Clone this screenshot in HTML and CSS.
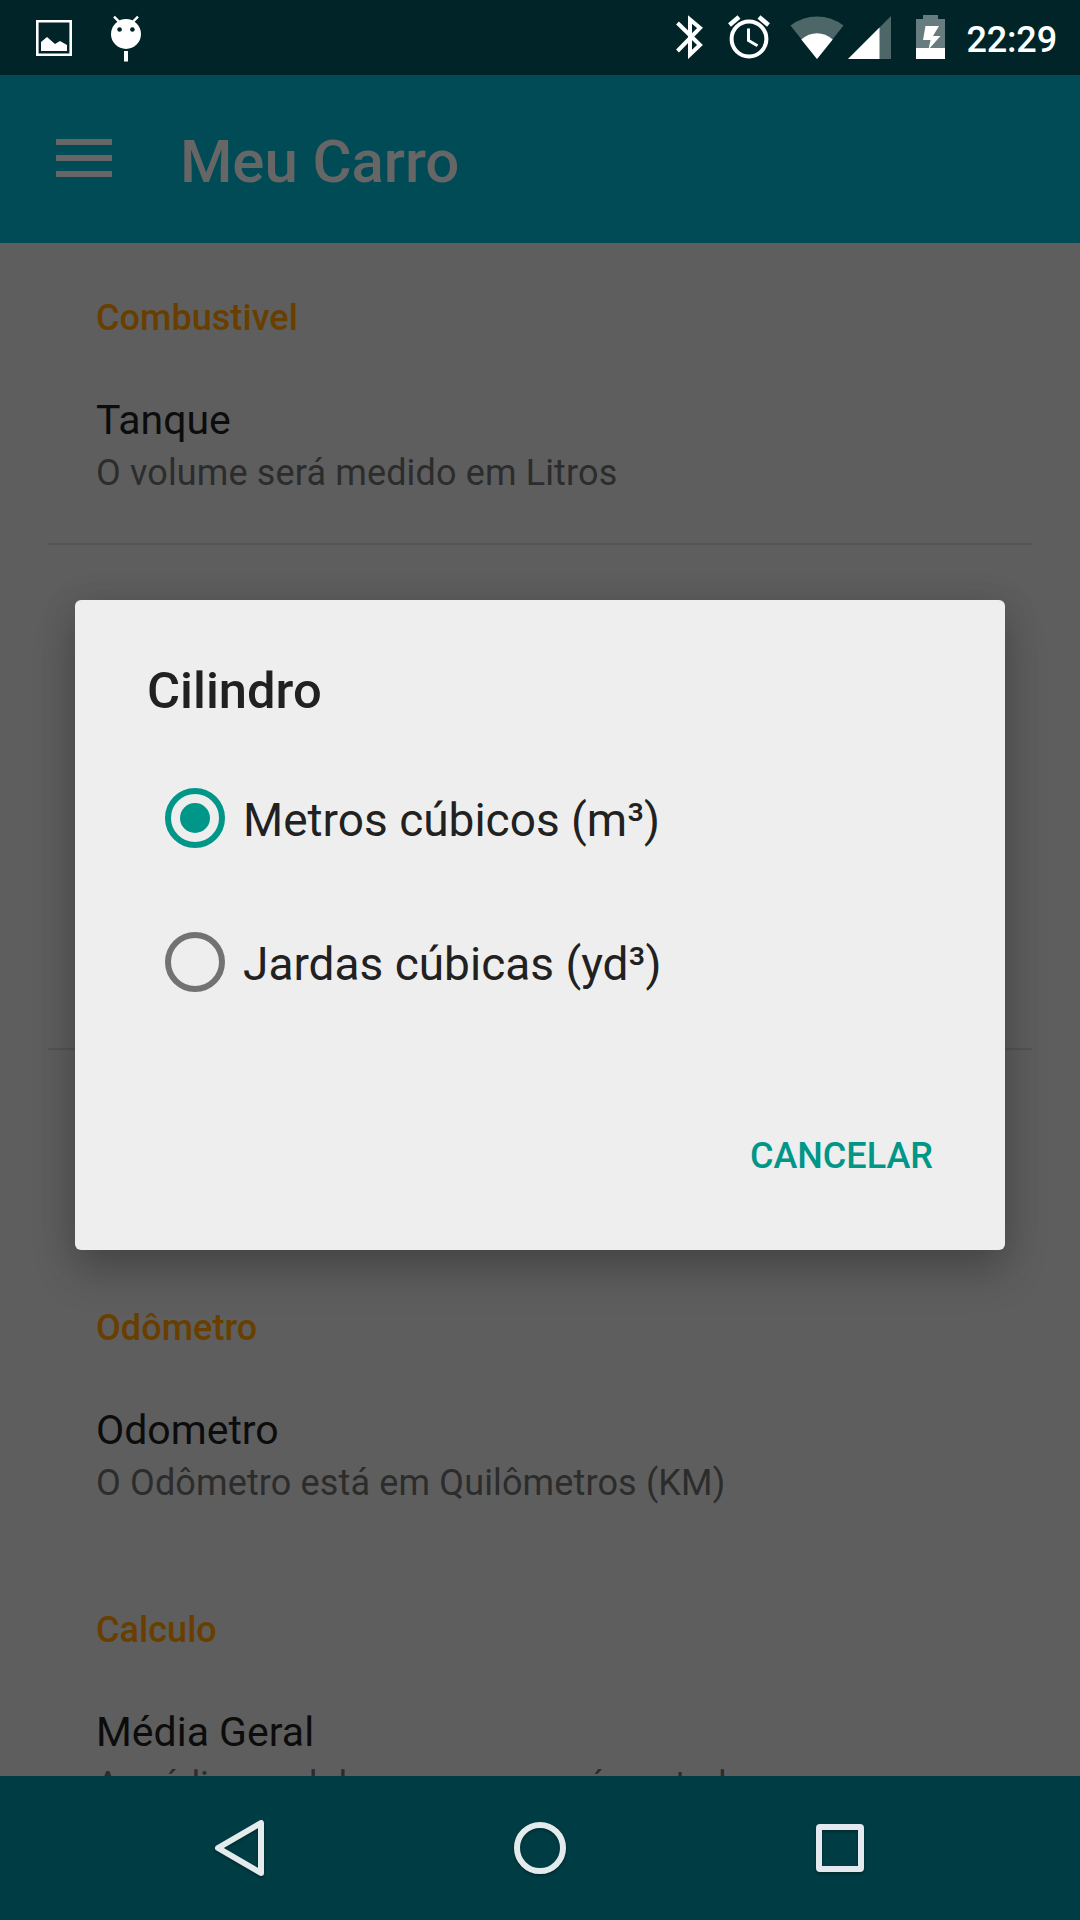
FILE: index.html
```html
<!DOCTYPE html>
<html lang="pt-BR">
<head>
<meta charset="utf-8">
<title>Meu Carro</title>
<link rel="stylesheet" href="styles.css">
</head>
<body>
<div class="screen">
  <header class="status-bar">
    <div class="notifications">
      <svg class="icon-picture" width="36" height="36" viewBox="0 0 36 36"><path d="M0 0H36V36H0ZM2.600 2.600V33.400H33.400V2.600Z" fill="#fff" fill-rule="evenodd"/><path d="M5 31V22L11 17L19 24L24 21L31 25V31Z" fill="#fff"/></svg>
      <svg class="icon-droid" width="30" height="48" viewBox="0 0 30 48"><path d="M3 1.600L8 6.600M27 1.600L22 6.600" stroke="#fff" stroke-width="2.400"/><circle cx="15" cy="19" r="15" fill="#fff"/><circle cx="8.600" cy="14.500" r="2.300" fill="#002427"/><circle cx="21.400" cy="14.500" r="2.300" fill="#002427"/><path d="M13 36H17V46.500H13Z" fill="#fff"/></svg>
    </div>
    <div class="indicators">
      <svg class="icon-bluetooth" width="27" height="44" viewBox="0 0 27 44"><path d="M1.500 8L24 30L14 39.500V4.500L24 13L1.500 36" fill="none" stroke="#fff" stroke-width="4"/></svg>
      <svg class="icon-alarm" width="42" height="44" viewBox="0 0 42 44"><circle cx="21" cy="24" r="17.400" fill="none" stroke="#fff" stroke-width="4"/><path d="M1.500 10L11 2M40.500 10L31 2" stroke="#fff" stroke-width="4.500"/><path d="M20.500 13.500V25.500L29.500 30.700" fill="none" stroke="#fff" stroke-width="3"/></svg>
      <svg class="icon-wifi" width="54" height="44" viewBox="0 0 54 44"><path d="M27 43L0.500 9.500Q12.500 0.500 27 0.500T53.500 9.500Z" fill="#4d6668"/><path d="M27 43L11.300 23.400Q18.500 17.300 27 17.300T42.700 23.400Z" fill="#fff"/></svg>
      <svg class="icon-signal" width="43" height="43" viewBox="0 0 43 43"><path d="M43 0V43H0Z" fill="#4d6668"/><path d="M31.500 11.500V43H0Z" fill="#fff"/></svg>
      <svg class="icon-battery" width="29" height="44" viewBox="0 0 29 44"><path d="M7 0H22V4H29V44H0V4H7Z" fill="#677c7e"/><path d="M0 33H29V44H0Z" fill="#fff"/><path d="M9.500 11H23L17 21H24.500L12.500 34.500L14.500 25H7Z" fill="#fff"/></svg>
      <span class="clock">22:29</span>
    </div>
  </header>

  <div class="app-bar">
    <svg class="icon-menu" width="56" height="38" viewBox="0 0 56 38"><path d="M0 0H56V6H0ZM0 16H56V22H0ZM0 32H56V38H0Z" fill="#666"/></svg>
    <h1 class="app-title">Meu Carro</h1>
  </div>

  <main class="settings">
    <section class="group group-fuel">
      <h2 class="group-title">Combustivel</h2>
      <div class="item">
        <div class="item-title">Tanque</div>
        <div class="item-summary">O volume será medido em Litros</div>
      </div>
    </section>
    <section class="group group-cylinder"></section>
    <section class="group group-odometer">
      <h2 class="group-title">Odômetro</h2>
      <div class="item">
        <div class="item-title">Odometro</div>
        <div class="item-summary">O Odômetro está em Quilômetros (KM)</div>
      </div>
    </section>
    <section class="group group-math">
      <h2 class="group-title">Calculo</h2>
      <div class="item">
        <div class="item-title">Média Geral</div>
        <div class="item-summary">A média geral do seu carro será contada</div>
      </div>
    </section>
  </main>

  <nav class="nav-bar">
    <svg class="nav-icon" width="60" height="60" viewBox="0 0 60 60"><path d="M8 30L51 5V55Z" fill="none" stroke="#e4ebed" stroke-width="6" stroke-linejoin="round"/></svg>
    <svg class="nav-icon" width="60" height="60" viewBox="0 0 60 60"><circle cx="30" cy="30" r="23" fill="none" stroke="#e4ebed" stroke-width="6"/></svg>
    <svg class="nav-icon" width="60" height="60" viewBox="0 0 60 60"><rect x="9" y="9" width="42" height="42" rx="1" fill="none" stroke="#e4e9ef" stroke-width="6"/></svg>
  </nav>

  <div class="dialog">
    <h2 class="dialog-title">Cilindro</h2>
    <div class="option">
      <span class="radio radio-on"></span>
      <span class="option-label">Metros cúbicos (m³)</span>
    </div>
    <div class="option">
      <span class="radio"></span>
      <span class="option-label">Jardas cúbicas (yd³)</span>
    </div>
    <div class="dialog-actions"><span class="action">CANCELAR</span></div>
  </div>
</div>
</body>
</html>
```
FILE: styles.css
```css
* { box-sizing: border-box; margin: 0; padding: 0; }
body { font-family: Roboto, sans-serif; background: #5e5e5e; }
svg { display: block; flex: none; }

.screen {
  position: relative;
  width: 1080px;
  height: 1920px;
  overflow: hidden;
  display: flex;
  flex-direction: column;
}

.status-bar {
  flex: none;
  height: 75px;
  background: #002427;
  display: flex;
  justify-content: space-between;
  padding: 0 23px 0 36px;
}
.notifications, .indicators { display: flex; align-items: flex-start; }
.icon-picture { margin-top: 20px; }
.icon-droid { margin: 15px 0 0 39px; }
.icon-bluetooth { margin: 15px 25px 0 0; }
.icon-alarm { margin: 15px 20px 0 0; }
.icon-wifi { margin: 16px 4.500px 0 0; }
.icon-signal { margin: 16px 25px 0 0; }
.icon-battery { margin: 15px 21px 0 0; }
.clock { font-size: 36px; font-weight: 500; line-height: 42px; color: #fff; margin-top: 19px; letter-spacing: -.15px; }

.app-bar {
  flex: none;
  height: 168px;
  background: #004b56;
  display: flex;
  align-items: center;
  padding-left: 56px;
}
.icon-menu { margin-bottom: 2px; }
.app-title { margin-left: 68px; padding-top: 5px; font-size: 60px; line-height: 70px; font-weight: 500; letter-spacing: -.1px; color: #666; }

.settings { flex: none; height: 1533px; overflow: hidden; padding: 0 48px; }
.group { padding: 0 48px; }
.group-fuel, .group-cylinder { border-bottom: 2px solid #545454; }
.group-fuel { height: 302px; padding-top: 54px; }
.group-cylinder { height: 505px; }
.group-odometer { height: 501px; padding-top: 257px; }
.group-math { padding-top: 58px; }
.group-title { font-size: 36px; line-height: 42px; font-weight: 500; letter-spacing: .05px; color: #693f00; }
.item { margin-top: 56px; }
.item-title { font-size: 41px; line-height: 50px; color: #0c0c0c; white-space: nowrap; }
.item-summary { font-size: 36px; line-height: 42px; margin-top: 7px; letter-spacing: .14px; color: #2c2c2c; white-space: nowrap; }

.nav-bar {
  flex: none;
  height: 144px;
  background: #003c43;
  display: flex;
  justify-content: center;
  align-items: center;
  gap: 240px;
}
.nav-icon { filter: drop-shadow(0 2px 1px rgba(0, 0, 0, .25)); }

.dialog {
  position: absolute;
  left: 75px;
  top: 600px;
  width: 930px;
  height: 650px;
  padding: 61px 72px 0;
  border-radius: 6px;
  background: #eee;
  box-shadow: 0 22px 44px rgba(0, 0, 0, .2), 0 4px 36px rgba(0, 0, 0, .12);
}
.dialog-title { font-size: 50.700px; line-height: 60px; font-weight: 500; color: #212121; }
.option { height: 144px; display: flex; align-items: center; padding-left: 18px; }
.dialog-title + .option { margin-top: 25px; }
.radio {
  flex: none;
  width: 60px;
  height: 60px;
  border: 6px solid #727272;
  border-radius: 50%;
  display: grid;
  place-items: center;
}
.radio-on { border-color: #009688; }
.radio-on::after { content: ""; width: 30px; height: 30px; border-radius: 50%; background: #009688; }
.option-label { margin: 4px 0 0 18px; font-size: 46px; line-height: 56px; color: #212121; white-space: nowrap; }
.dialog-actions { display: flex; justify-content: flex-end; margin-top: 101px; }
.action { font-size: 36px; line-height: 42px; font-weight: 500; color: #009688; }
```
